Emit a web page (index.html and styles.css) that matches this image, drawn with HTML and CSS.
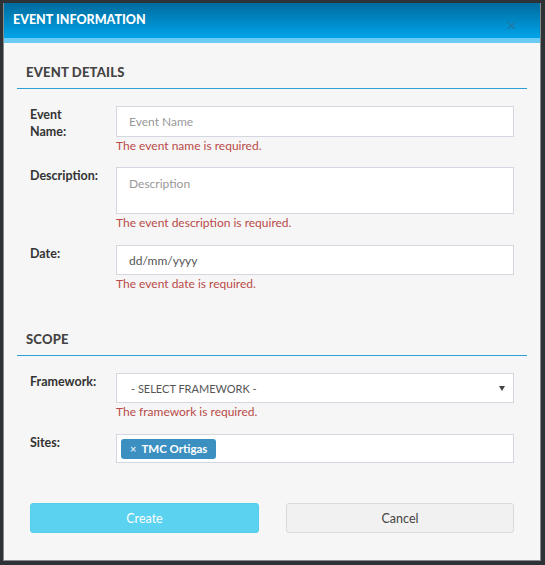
FILE: index.html
```html
<!DOCTYPE html>
<html>
<head>
<meta charset="utf-8">
<link rel="stylesheet" href="styles.css">
</head>
<body>
<div class="modal">
  <div class="modal-header">
    <h1 class="modal-title">EVENT INFORMATION</h1>
    <span class="close">×</span>
  </div>
  <div class="modal-body">
    <section class="section">
      <h2 class="section-title">EVENT DETAILS</h2>
      <div class="row">
        <label class="label">Event<br>Name:</label>
        <div class="field">
          <div class="input placeholder">Event Name</div>
          <div class="error">The event name is required.</div>
        </div>
      </div>
      <div class="row">
        <label class="label">Description:</label>
        <div class="field">
          <div class="input textarea placeholder">Description</div>
          <div class="error">The event description is required.</div>
        </div>
      </div>
      <div class="row row-date">
        <label class="label">Date:</label>
        <div class="field">
          <div class="input date">dd/mm/yyyy</div>
          <div class="error">The event date is required.</div>
        </div>
      </div>
    </section>
    <section class="section scope">
      <h2 class="section-title">SCOPE</h2>
      <div class="row">
        <label class="label">Framework:</label>
        <div class="field">
          <div class="input select"><span>- SELECT FRAMEWORK -</span><span class="caret"></span></div>
          <div class="error">The framework is required.</div>
        </div>
      </div>
      <div class="row row-sites">
        <label class="label">Sites:</label>
        <div class="field">
          <div class="input tags"><span class="tag"><span class="tag-x">×</span>TMC Ortigas</span></div>
        </div>
      </div>
    </section>
    <div class="actions">
      <button class="btn btn-create">Create</button>
      <button class="btn btn-cancel">Cancel</button>
    </div>
  </div>
</div>
</body>
</html>
```

FILE: styles.css
```css
* { box-sizing: border-box; }
html, body { margin: 0; padding: 0; }
body {
  width: 545px;
  height: 565px;
  overflow: hidden;
  background: #2c3236;
  font-family: Lato, "Open Sans", sans-serif;
  font-size: 13px;
  color: #333;
}
.modal {
  margin: 3px 0 0 3px;
  width: 538px;
  height: 558px;
  background: #f6f6f6;
  border: 1px solid #8a8a8a;
  border-top: 0;
  display: flex;
  flex-direction: column;
}
.modal-header {
  height: 40px;
  background: linear-gradient(#006b9d, #00a4ea);
  border-bottom: 5px solid #6ccbf4;
  display: flex;
  align-items: flex-start;
  justify-content: space-between;
  padding: 9px 24px 0 9px;
}
.modal-title {
  margin: 0;
  color: #fff;
  font-size: 12.5px;
  font-weight: 900;
  line-height: 16px;
}
.close {
  color: #27749e;
  font-size: 16px;
  line-height: 16px;
  margin-top: 5px;
}
.modal-body {
  padding: 21px 13px 0 13px;
  flex: 1;
  display: flex;
  flex-direction: column;
}
.section-title {
  margin: 0;
  padding: 0 0 8px 9px;
  font-size: 13px;
  font-weight: 900;
  color: #444;
  line-height: 16px;
  letter-spacing: 0.2px;
  border-bottom: 1px solid #2f9fd8;
}
.section .row:first-of-type { margin-top: 17px; }
.row {
  display: flex;
  margin-top: 14px;
  padding-left: 13px;
}
.row-date { margin-top: 15px; }
.row-sites { margin-top: 15px; }
.label {
  width: 86px;
  font-weight: 700;
  font-size: 12.5px;
  line-height: 17px;
  color: #333;
}
.field { width: 398px; }
.input {
  height: 31px;
  background: #fff;
  border: 1px solid #d3d7e0;
  padding: 0 12px;
  display: flex;
  align-items: center;
  color: #555;
  font-size: 12px;
}
.placeholder { color: #999; }
.textarea { height: 47px; align-items: flex-start; padding-top: 8px; }
.date { height: 30px; color: #555; }
.select { height: 30px; justify-content: space-between; padding: 0 8px 0 14px; font-size: 11px; }
.caret {
  width: 0; height: 0;
  border-left: 3px solid transparent;
  border-right: 3px solid transparent;
  border-top: 5px solid #444;
}
.tags { height: 29px; padding: 0 4px; }
.tag {
  background: #3b8fc1;
  color: #fff;
  border-radius: 3px;
  height: 20px;
  padding: 0 9px 0 9px;
  display: inline-flex;
  align-items: center;
  font-weight: 700;
  font-size: 11.5px;
}
.tag-x { font-size: 11px; margin-right: 5px; color: #d6e8f3; }
.error {
  color: #b94a48;
  font-size: 12px;
  line-height: 15px;
  margin-top: 1px;
}
.scope { margin-top: 40px; }
.actions {
  display: flex;
  justify-content: space-between;
  padding: 0 13px;
  margin-top: 40px;
}
.btn {
  height: 30px;
  border-radius: 3px;
  font-family: inherit;
  font-size: 12.5px;
  width: 229px;
}
.btn-create {
  background: #5ad2f0;
  border: 1px solid #55cdeb;
  color: #fff;
}
.btn-cancel {
  width: 228px;
  background: #f1f1f1;
  border: 1px solid #dadada;
  color: #444;
}
```
